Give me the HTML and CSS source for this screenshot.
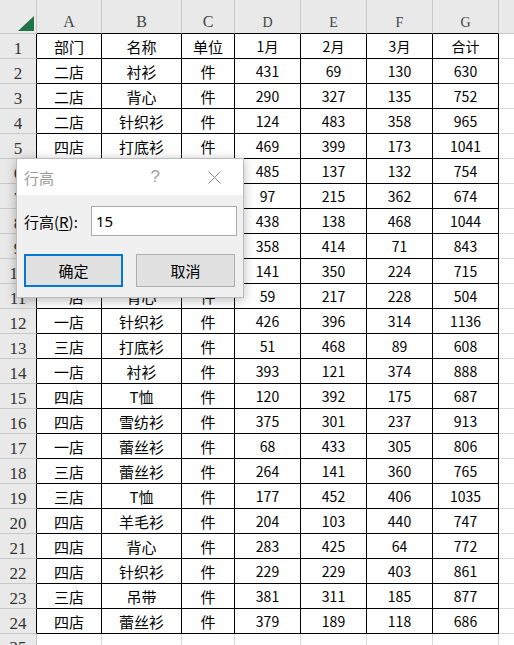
FILE: index.html
```html
<!DOCTYPE html>
<html lang="zh-CN">
<head>
<meta charset="utf-8">
<title>行高</title>
<link rel="stylesheet" href="styles.css">
</head>
<body>
<div class="sheet">
  <div class="row head"><div class="corner"><svg class="tri" width="16" height="15" viewBox="0 0 16 15"><polygon points="16,0 16,15 0,15" fill="#217346"/></svg></div><div>A</div><div>B</div><div>C</div><div>D</div><div>E</div><div>F</div><div>G</div><div></div></div>
  <div class="row"><div>1</div><div>部门</div><div>名称</div><div>单位</div><div>1月</div><div>2月</div><div>3月</div><div>合计</div><div></div></div>
  <div class="row"><div>2</div><div>二店</div><div>衬衫</div><div>件</div><div>431</div><div>69</div><div>130</div><div>630</div><div></div></div>
  <div class="row"><div>3</div><div>二店</div><div>背心</div><div>件</div><div>290</div><div>327</div><div>135</div><div>752</div><div></div></div>
  <div class="row"><div>4</div><div>二店</div><div>针织衫</div><div>件</div><div>124</div><div>483</div><div>358</div><div>965</div><div></div></div>
  <div class="row"><div>5</div><div>四店</div><div>打底衫</div><div>件</div><div>469</div><div>399</div><div>173</div><div>1041</div><div></div></div>
  <div class="row"><div>6</div><div>一店</div><div>雪纺衫</div><div>件</div><div>485</div><div>137</div><div>132</div><div>754</div><div></div></div>
  <div class="row"><div>7</div><div>三店</div><div>衬衫</div><div>件</div><div>97</div><div>215</div><div>362</div><div>674</div><div></div></div>
  <div class="row"><div>8</div><div>二店</div><div>T恤</div><div>件</div><div>438</div><div>138</div><div>468</div><div>1044</div><div></div></div>
  <div class="row"><div>9</div><div>三店</div><div>吊带</div><div>件</div><div>358</div><div>414</div><div>71</div><div>843</div><div></div></div>
  <div class="row"><div>10</div><div>二店</div><div>羊毛衫</div><div>件</div><div>141</div><div>350</div><div>224</div><div>715</div><div></div></div>
  <div class="row"><div>11</div><div>一店</div><div>背心</div><div>件</div><div>59</div><div>217</div><div>228</div><div>504</div><div></div></div>
  <div class="row"><div>12</div><div>一店</div><div>针织衫</div><div>件</div><div>426</div><div>396</div><div>314</div><div>1136</div><div></div></div>
  <div class="row"><div>13</div><div>三店</div><div>打底衫</div><div>件</div><div>51</div><div>468</div><div>89</div><div>608</div><div></div></div>
  <div class="row"><div>14</div><div>一店</div><div>衬衫</div><div>件</div><div>393</div><div>121</div><div>374</div><div>888</div><div></div></div>
  <div class="row"><div>15</div><div>四店</div><div>T恤</div><div>件</div><div>120</div><div>392</div><div>175</div><div>687</div><div></div></div>
  <div class="row"><div>16</div><div>四店</div><div>雪纺衫</div><div>件</div><div>375</div><div>301</div><div>237</div><div>913</div><div></div></div>
  <div class="row"><div>17</div><div>一店</div><div>蕾丝衫</div><div>件</div><div>68</div><div>433</div><div>305</div><div>806</div><div></div></div>
  <div class="row"><div>18</div><div>三店</div><div>蕾丝衫</div><div>件</div><div>264</div><div>141</div><div>360</div><div>765</div><div></div></div>
  <div class="row"><div>19</div><div>三店</div><div>T恤</div><div>件</div><div>177</div><div>452</div><div>406</div><div>1035</div><div></div></div>
  <div class="row"><div>20</div><div>四店</div><div>羊毛衫</div><div>件</div><div>204</div><div>103</div><div>440</div><div>747</div><div></div></div>
  <div class="row"><div>21</div><div>四店</div><div>背心</div><div>件</div><div>283</div><div>425</div><div>64</div><div>772</div><div></div></div>
  <div class="row"><div>22</div><div>四店</div><div>针织衫</div><div>件</div><div>229</div><div>229</div><div>403</div><div>861</div><div></div></div>
  <div class="row"><div>23</div><div>三店</div><div>吊带</div><div>件</div><div>381</div><div>311</div><div>185</div><div>877</div><div></div></div>
  <div class="row"><div>24</div><div>四店</div><div>蕾丝衫</div><div>件</div><div>379</div><div>189</div><div>118</div><div>686</div><div></div></div>
  <div class="row blank"><div>25</div><div></div><div></div><div></div><div></div><div></div><div></div><div></div><div></div></div>
</div>

<div class="dialog">
  <div class="dlg-title">
    <span class="dlg-name">行高</span>
    <span class="dlg-help">?</span>
    <svg class="dlg-close" width="13" height="13" viewBox="0 0 13 13"><path d="M0.5 0.5L12.5 12.5M12.5 0.5L0.5 12.5" stroke="#8a8a8a" stroke-width="1" fill="none"/></svg>
  </div>
  <div class="dlg-body">
    <div class="dlg-field">
      <span class="dlg-label">行高(<u>R</u>):</span>
      <div class="dlg-input">15</div>
    </div>
    <div class="dlg-buttons">
      <div class="btn primary">确定</div>
      <div class="btn">取消</div>
    </div>
  </div>
</div>
</body>
</html>
```
FILE: styles.css
```css
* { box-sizing: border-box; }
html, body { margin: 0; padding: 0; background: #fff; }
body {
  width: 514px;
  height: 645px;
  overflow: hidden;
  position: relative;
  font-family: "Noto Sans CJK SC", sans-serif;
}

.sheet {
  display: grid;
  grid-template-columns: 37px 65px 80px 53px 66px 66px 66px 66px 15px;
  grid-template-rows: 34px repeat(25, 25px);
}

.row { display: contents; }

.row > div {
  display: flex;
  align-items: center;
  justify-content: center;
  border-right: 1px solid #000;
  border-bottom: 1px solid #000;
  font-size: 15px;
  line-height: 1;
  color: #000;
  white-space: nowrap;
  overflow: hidden;
}

.row > div:nth-child(n+5):nth-child(-n+8) { font-size: 14px; }

/* row headers */
.row > div:first-child {
  background: #e9e9e9;
  border-bottom-color: #c8c8c8;
  font-family: "Liberation Serif", serif;
  font-size: 17px;
  color: #333;
  padding-top: 4px;
}

/* column H (partially visible) */
.row > div:last-child {
  border-right: none;
  border-bottom-color: #dadada;
}

/* column headers */
.row.head > div {
  background: #e9e9e9;
  border-right-color: #c8c8c8;
  font-family: "Liberation Serif", serif;
  font-size: 16px;
  color: #444;
  align-items: flex-end;
  padding-top: 0;
  padding-bottom: 3px;
}
.row.head > div:first-child,
.row.head > div:last-child { border-bottom-color: #c8c8c8; }
.row.head > .corner {
  justify-content: flex-end;
  align-items: flex-end;
  padding: 0 2px 2px 0;
}
.tri { display: block; }

/* empty row 25 */
.row.blank > div { border-right-color: #dadada; border-bottom-color: #dadada; }
.row.blank > div:first-child { border-right-color: #c8c8c8; border-bottom-color: #c8c8c8; padding-top: 2px; }

/* dialog */
.dialog {
  position: absolute;
  left: 16px;
  top: 158px;
  width: 228px;
  height: 140px;
  background: #f0f0f0;
  border: 1px solid rgba(0, 0, 0, 0.22);
  box-shadow: 0 2px 10px rgba(0, 0, 0, 0.28);
  display: flex;
  flex-direction: column;
}

.dlg-title {
  height: 36px;
  background: #fff;
  display: flex;
  align-items: center;
  padding: 0 22px 0 7px;
  flex: none;
}
.dlg-name {
  flex: 1;
  font-size: 15px;
  color: #9a9a9a;
}
.dlg-help {
  font-family: "Liberation Sans", sans-serif;
  font-size: 17px;
  color: #a0a0a0;
  margin-right: 48px;
}
.dlg-close { display: block; }

.dlg-body {
  flex: 1;
  padding: 11px 6px 0 7px;
  display: flex;
  flex-direction: column;
  gap: 18px;
}
.dlg-field {
  display: flex;
  align-items: center;
}
.dlg-label {
  font-size: 15px;
  color: #000;
}
.dlg-label u { text-underline-offset: 2px; }
.dlg-input {
  margin-left: auto;
  width: 146px;
  height: 30px;
  background: #fff;
  border: 1px solid #a9a9a9;
  display: flex;
  align-items: center;
  padding-left: 4px;
  font-family: "Noto Sans", sans-serif;
  font-size: 15px;
  color: #000;
}
.dlg-buttons {
  display: flex;
  gap: 13px;
}
.btn {
  width: 99px;
  height: 33px;
  background: #e1e1e1;
  border: 1px solid #adadad;
  display: flex;
  align-items: center;
  justify-content: center;
  font-size: 15px;
  color: #000;
}
.btn.primary {
  border: 2px solid #0078d7;
}
```
